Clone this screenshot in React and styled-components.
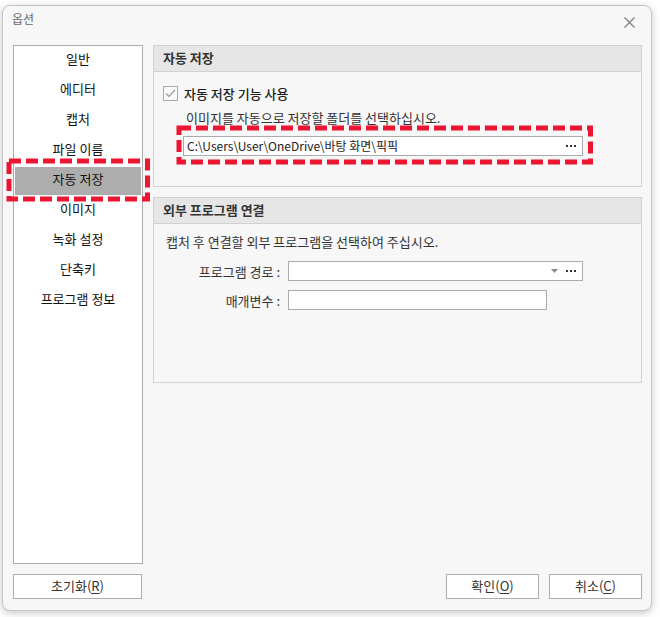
import React, { useState } from 'react';
import styled, { createGlobalStyle } from 'styled-components';

const GlobalStyle = createGlobalStyle`
  html, body {
    margin: 0;
    padding: 0;
    background: #ffffff;
  }
  body {
    font-family: "Noto Sans CJK KR", "Noto Sans", sans-serif;
    font-size: 13px;
    color: #222;
  }
`;

const Page = styled.div`
  position: relative;
  width: 660px;
  height: 617px;
  padding: 5px 0 0 2px;
  box-sizing: border-box;
`;

const Window = styled.div`
  width: 650px;
  height: 606px;
  box-sizing: border-box;
  border: 1px solid #c6c6c6;
  border-radius: 8px;
  background: #f7f7f7;
  box-shadow: 0 2px 8px rgba(0, 0, 0, 0.22);
  display: flex;
  flex-direction: column;
`;

const TitleBar = styled.div`
  height: 39px;
  flex: none;
  display: flex;
  align-items: flex-start;
  justify-content: space-between;
  padding: 5px 16px 0 9px;
  box-sizing: border-box;
`;

const Title = styled.span`
  color: #6a6a6a;
  font-size: 12px;
  line-height: 16px;
`;

const CloseButton = styled.button`
  border: none;
  background: none;
  padding: 0;
  margin-top: 5px;
  width: 12px;
  height: 12px;
  display: flex;
  align-items: center;
  justify-content: center;
  cursor: pointer;
`;

const Body = styled.div`
  flex: 1;
  display: flex;
  gap: 10px;
  padding: 0 9px 0 10px;
  min-height: 0;
`;

const Sidebar = styled.ul`
  list-style: none;
  margin: 0;
  padding: 0;
  width: 130px;
  flex: none;
  box-sizing: border-box;
  background: #ffffff;
  border: 1px solid #ababab;
`;

const NavItem = styled.li`
  height: 30px;
  padding: 1px;
  box-sizing: border-box;
  background-clip: content-box;
  display: flex;
  align-items: center;
  justify-content: center;
  font-size: 13px;
  color: #111;
  background-color: ${p => (p.$active ? '#adadad' : 'transparent')};
  cursor: pointer;
`;

const NavLabel = styled.span`
  line-height: 16px;
  margin-bottom: 5px;
`;

const Content = styled.div`
  flex: 1;
  display: flex;
  flex-direction: column;
  gap: 10px;
`;

const Section = styled.section`
  border: 1px solid #d2d2d2;
  height: ${p => p.$height}px;
  box-sizing: border-box;
  display: flex;
  flex-direction: column;
`;

const SectionHeader = styled.div`
  height: 26px;
  flex: none;
  box-sizing: border-box;
  background: #e6e6e6;
  border-bottom: 1px solid #d2d2d2;
  padding: 0 9px 2px;
  display: flex;
  align-items: center;
  font-weight: 700;
  font-size: 13px;
  color: #333;
`;

const SectionBody = styled.div`
  padding: ${p => p.$pad};
  display: flex;
  flex-direction: column;
`;

const CheckRow = styled.label`
  display: flex;
  align-items: center;
  gap: 6px;
  height: 16px;
  font-size: 13px;
  color: #1e1e1e;
  font-weight: 500;
  cursor: pointer;
`;

const CheckBox = styled.span`
  width: 15px;
  height: 15px;
  box-sizing: border-box;
  border: 1px solid #a9a9a9;
  background: #f9f9f9;
  display: flex;
  align-items: center;
  justify-content: center;
`;

const Hint = styled.p`
  margin: ${p => p.$margin};
  font-size: 13px;
  line-height: 16px;
  color: #333;
`;

const Field = styled.div`
  width: ${p => p.$width}px;
  height: 20px;
  box-sizing: border-box;
  background: #ffffff;
  border: 1px solid #ababab;
  display: flex;
  align-items: center;
  padding: 0 6px 0 3px;
  gap: 8px;
  margin-left: ${p => p.$indent || 0}px;
  margin-top: ${p => p.$top || 0}px;
`;

const FieldText = styled.span`
  flex: 1;
  font-size: 12px;
  line-height: 18px;
  color: #222;
  white-space: nowrap;
  overflow: hidden;
`;

const FormRow = styled.div`
  display: flex;
  align-items: center;
  gap: 8px;
  margin-top: ${p => p.$top}px;
`;

const FormLabel = styled.span`
  width: 114px;
  text-align: right;
  font-size: 13px;
  color: #333;
  white-space: nowrap;
`;

const Footer = styled.div`
  height: 46px;
  flex: none;
  display: flex;
  align-items: flex-start;
  padding: 10px 9px 0 10px;
  box-sizing: border-box;
  gap: 10px;
`;

const Button = styled.button`
  width: ${p => p.$width}px;
  height: 25px;
  box-sizing: border-box;
  background: #ffffff;
  border: 1px solid #adadad;
  font-family: inherit;
  font-size: 13px;
  color: #333;
  padding: 0 0 2px;
  cursor: pointer;
  margin-left: ${p => (p.$push ? 'auto' : '0')};

  u {
    text-decoration-thickness: 1px;
    text-underline-offset: 2px;
  }
`;

const Annotations = styled.svg`
  position: absolute;
  inset: 0;
  pointer-events: none;
`;

const Dots = () => (
  <svg width="10" height="2" viewBox="0 0 10 2">
    <rect x="0" y="0" width="2" height="2" fill="#333" />
    <rect x="4" y="0" width="2" height="2" fill="#333" />
    <rect x="8" y="0" width="2" height="2" fill="#333" />
  </svg>
);

const Caret = () => (
  <svg width="7" height="4" viewBox="0 0 7 4">
    <path d="M0 0 L7 0 L3.5 4 Z" fill="#8a8a8a" />
  </svg>
);

const menu = ['일반', '에디터', '캡처', '파일 이름', '자동 저장', '이미지', '녹화 설정', '단축키', '프로그램 정보'];

const App = () => {
  const [active, setActive] = useState('자동 저장');
  const [autoSave, setAutoSave] = useState(true);

  return (
    <>
      <GlobalStyle />
      <Page>
        <Window>
          <TitleBar>
            <Title>옵션</Title>
            <CloseButton aria-label="닫기">
              <svg width="11" height="11" viewBox="0 0 11 11">
                <path d="M0.5 0.5 L10.5 10.5 M10.5 0.5 L0.5 10.5" stroke="#7a7a7a" strokeWidth="1.1" />
              </svg>
            </CloseButton>
          </TitleBar>

          <Body>
            <Sidebar>
              {menu.map(name => (
                <NavItem key={name} $active={name === active} onClick={() => setActive(name)}>
                  <NavLabel>{name}</NavLabel>
                </NavItem>
              ))}
            </Sidebar>

            <Content>
              <Section $height={142}>
                <SectionHeader>자동 저장</SectionHeader>
                <SectionBody $pad="13px 9px 0 9px">
                  <CheckRow onClick={() => setAutoSave(!autoSave)}>
                    <CheckBox>
                      {autoSave && (
                        <svg width="11" height="9" viewBox="0 0 11 9">
                          <path d="M1 4.5 L4 7.5 L10 1" fill="none" stroke="#9a9a9a" strokeWidth="1.2" />
                        </svg>
                      )}
                    </CheckBox>
                    자동 저장 기능 사용
                  </CheckRow>
                  <Hint $margin="9px 0 0 23px">이미지를 자동으로 저장할 폴더를 선택하십시오.</Hint>
                  <Field $width={400} $indent={20} $top={10}>
                    <FieldText>C:\Users\User\OneDrive\바탕 화면\픽픽</FieldText>
                    <Dots />
                  </Field>
                </SectionBody>
              </Section>

              <Section $height={186}>
                <SectionHeader>외부 프로그램 연결</SectionHeader>
                <SectionBody $pad="10px 9px 0 12px">
                  <Hint $margin="0">캡처 후 연결할 외부 프로그램을 선택하여 주십시오.</Hint>
                  <FormRow $top={11}>
                    <FormLabel>프로그램 경로 :</FormLabel>
                    <Field $width={295}>
                      <FieldText />
                      <Caret />
                      <Dots />
                    </Field>
                  </FormRow>
                  <FormRow $top={9}>
                    <FormLabel>매개변수 :</FormLabel>
                    <Field $width={259}>
                      <FieldText />
                    </Field>
                  </FormRow>
                </SectionBody>
              </Section>
            </Content>
          </Body>

          <Footer>
            <Button $width={129}>초기화(<u>R</u>)</Button>
            <Button $width={93} $push>확인(<u>O</u>)</Button>
            <Button $width={93}>취소(<u>C</u>)</Button>
          </Footer>
        </Window>

        <Annotations width="660" height="617">
          <rect x="9" y="161" width="138.5" height="38" fill="none" stroke="#ec1532" strokeWidth="5" strokeDasharray="12 5" />
          <rect x="179" y="128" width="411.5" height="34" fill="none" stroke="#ec1532" strokeWidth="5" strokeDasharray="12 5" />
        </Annotations>
      </Page>
    </>
  );
};

export default App;
